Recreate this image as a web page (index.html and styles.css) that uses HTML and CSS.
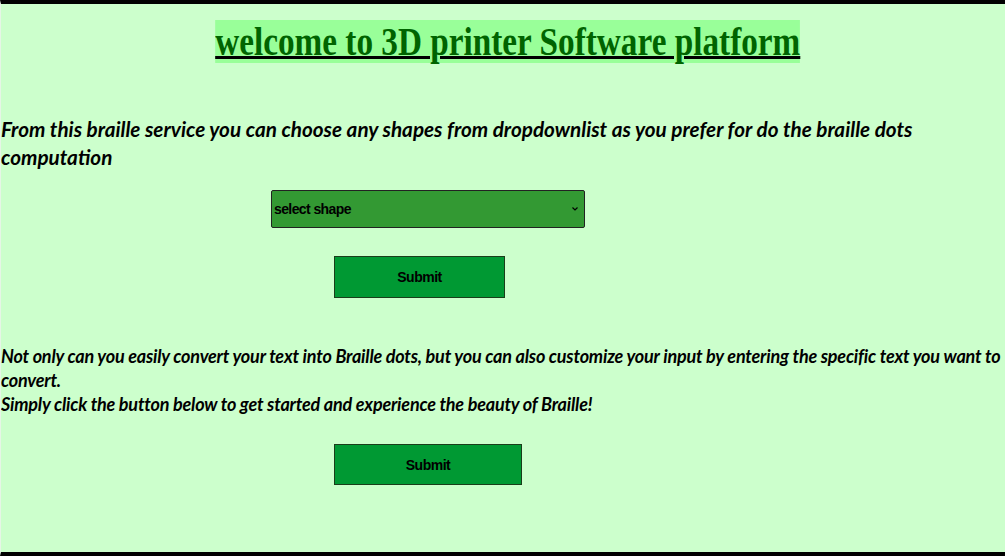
FILE: index.html
```html
<!DOCTYPE html>
<html>
<head>
<meta charset="utf-8">
<link rel="stylesheet" href="styles.css">
</head>
<body>
<div class="page">
  <div class="title-row"><h1 class="title">welcome to 3D printer Software platform</h1></div>
  <p class="intro">From this braille service you can choose any shapes from dropdownlist as you prefer for do the braille dots computation</p>
  <form class="shape-form">
    <select class="shape-select"><option>select shape</option></select>
    <button type="button" class="btn btn-one">Submit</button>
  </form>
  <p class="info">Not only can you easily convert your text into Braille dots, but you can also customize your input by entering the specific text you want to convert.<br>Simply click the button below to get started and experience the beauty of Braille!</p>
  <div class="row-two"><button type="button" class="btn btn-two">Submit</button></div>
</div>
</body>
</html>
```
FILE: styles.css
```css
html, body { margin: 0; padding: 0; }
body { background: #000; }
.page {
  box-sizing: border-box;
  height: 556px;
  border-top: 4px solid #000;
  border-bottom: 4px solid #000;
  border-left: 1px solid #e6f5e6;
  background: #ccffcc;
  overflow: hidden;
}
.title-row { display: flex; justify-content: center; padding-top: 16px; padding-left: 10px; }
.title {
  margin: 0;
  display: inline-block;
  background: #99ff99;
  color: #006400;
  font-family: "Liberation Serif", serif;
  font-weight: bold;
  font-size: 41px;
  line-height: 43px;
  text-decoration: underline #000;
  text-decoration-thickness: 3px;
  text-underline-offset: 1px;
  transform: scaleX(0.811);
  white-space: nowrap;
}
.intro {
  margin: 52px 0 0 0;
  font-family: Lato, sans-serif;
  font-weight: bold;
  font-style: italic;
  font-size: 20.7px;
  line-height: 28px;
  color: #000;
}
.shape-form { display: flex; flex-direction: column; }
.shape-select {
  margin: 19px 0 0 270px;
  width: 314px;
  height: 38px;
  -webkit-appearance: none;
  appearance: none;
  background: #339933 url("data:image/svg+xml;utf8,<svg xmlns='http://www.w3.org/2000/svg' width='8' height='6' viewBox='0 0 8 6'><path d='M1.5 1.5 L4 4 L6.5 1.5' fill='none' stroke='%23000' stroke-width='1.2'/></svg>") no-repeat right 5px center;
  border: 1px solid #222;
  border-radius: 2px;
  font-family: "Liberation Sans", sans-serif;
  font-weight: bold;
  font-size: 14px;
  letter-spacing: -0.6px;
  color: #000;
  padding: 0 2px;
}
.btn {
  height: 42px;
  background: #009933;
  border: 1px solid #1a3d1a;
  font-family: "Liberation Sans", sans-serif;
  font-weight: bold;
  font-size: 14px;
  letter-spacing: -0.5px;
  color: #000;
  cursor: pointer;
}
.btn-one { margin: 28px 0 0 333px; width: 171px; }
.info {
  margin: 46px 0 0 0;
  font-family: Lato, sans-serif;
  font-weight: bold;
  font-style: italic;
  font-size: 18px;
  letter-spacing: -0.2px;
  line-height: 24px;
  color: #000;
}
.row-two { padding: 28px 0 0 333px; }
.btn-two { width: 188px; height: 41px; }
```
